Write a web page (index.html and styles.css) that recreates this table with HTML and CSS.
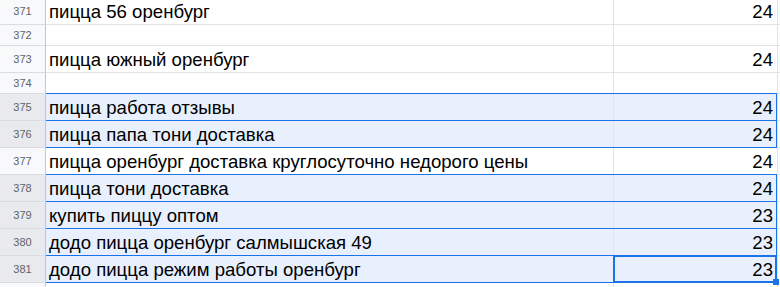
FILE: index.html
```html
<!DOCTYPE html>
<html lang="ru">
<head>
<meta charset="utf-8">
<title>Sheet</title>
<link rel="stylesheet" href="styles.css">
</head>
<body>
<div class="sheet">
  <div class="row tall first"><div class="hdr">371</div><div class="cell a">пицца 56 оренбург</div><div class="cell b">24</div><div class="cell c"></div></div>
  <div class="row short"><div class="hdr">372</div><div class="cell a"></div><div class="cell b"></div><div class="cell c"></div></div>
  <div class="row tall"><div class="hdr">373</div><div class="cell a">пицца южный оренбург</div><div class="cell b">24</div><div class="cell c"></div></div>
  <div class="row short"><div class="hdr">374</div><div class="cell a"></div><div class="cell b"></div><div class="cell c"></div></div>
  <div class="row tall sel"><div class="hdr">375</div><div class="cell a">пицца работа отзывы</div><div class="cell b">24</div><div class="cell c"></div></div>
  <div class="row tall sel"><div class="hdr">376</div><div class="cell a">пицца папа тони доставка</div><div class="cell b">24</div><div class="cell c"></div></div>
  <div class="row tall"><div class="hdr">377</div><div class="cell a">пицца оренбург доставка круглосуточно недорого цены</div><div class="cell b">24</div><div class="cell c"></div></div>
  <div class="row tall sel"><div class="hdr">378</div><div class="cell a">пицца тони доставка</div><div class="cell b">24</div><div class="cell c"></div></div>
  <div class="row tall sel"><div class="hdr">379</div><div class="cell a">купить пиццу оптом</div><div class="cell b">23</div><div class="cell c"></div></div>
  <div class="row tall sel"><div class="hdr">380</div><div class="cell a">додо пицца оренбург салмышская 49</div><div class="cell b">23</div><div class="cell c"></div></div>
  <div class="row tall sel"><div class="hdr">381</div><div class="cell a">додо пицца режим работы оренбург</div><div class="cell b">23</div><div class="cell c"></div><div class="active"><span class="handle"></span></div></div>
  <div class="row short"><div class="hdr"></div><div class="cell a"></div><div class="cell b"></div><div class="cell c"></div></div>
</div>
</body>
</html>
```

FILE: styles.css
```css
html, body {
  margin: 0;
  padding: 0;
  background: #ffffff;
  overflow: hidden;
}

.sheet {
  width: 780px;
  font-family: "Liberation Sans", Arial, sans-serif;
  color: #000000;
}

.row {
  position: relative;
  display: grid;
  grid-template-columns: 46px 568px 164px 1fr;
}

.row.first {
  margin-top: -2px;
}

.row.tall {
  height: 27px;
}

.row.short {
  height: 21px;
}

.hdr,
.cell {
  box-sizing: border-box;
  border-right: 1px solid #e2e3e3;
  border-bottom: 1px solid #e2e3e3;
}

.hdr {
  background: #f8f9fa;
  border-right-color: #c4c7c5;
  border-bottom-color: #dadce0;
  color: #5f6368;
  font-size: 11px;
  display: flex;
  align-items: center;
  justify-content: center;
}

.cell {
  font-size: 18.6px;
  line-height: 21px;
  display: flex;
  align-items: flex-end;
  padding-bottom: 2px;
  white-space: nowrap;
  overflow: hidden;
}

.cell.a {
  padding-left: 3px;
}

.cell.b {
  justify-content: flex-end;
  padding-right: 4px;
}

.cell.c {
  border-right: none;
}

.sel .hdr {
  background: #e8eaed;
}

.sel .cell.a,
.sel .cell.b {
  background: #e8f0fe;
}

.sel::after {
  content: "";
  position: absolute;
  left: 46px;
  right: 3px;
  top: -1px;
  bottom: 0;
  border: 1px solid #1a73e8;
  border-left: none;
  pointer-events: none;
}

.active {
  position: absolute;
  left: 613px;
  top: -1px;
  width: 164px;
  height: 28px;
  box-sizing: border-box;
  border: 2px solid #1a73e8;
  z-index: 2;
}

.handle {
  position: absolute;
  right: -4px;
  bottom: -4px;
  width: 6px;
  height: 6px;
  background: #1a73e8;
}
```
